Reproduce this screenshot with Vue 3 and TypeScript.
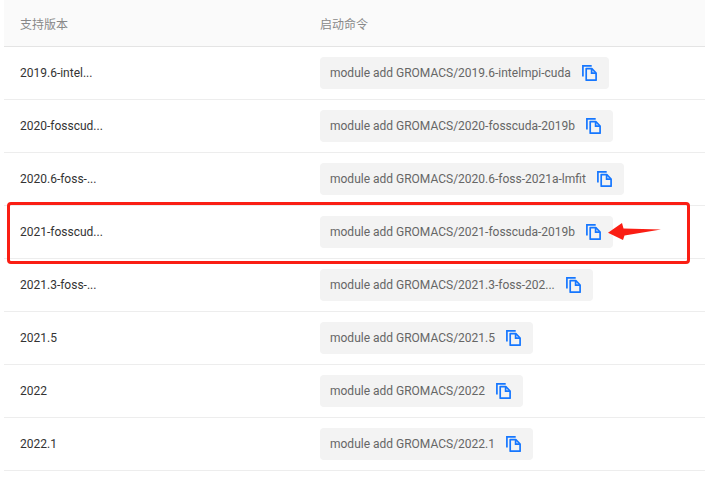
<script setup lang="ts">
interface Row { version: string; command: string }
const rows: Row[] = [
  { version: '2019.6-intel...', command: 'module add GROMACS/2019.6-intelmpi-cuda' },
  { version: '2020-fosscud...', command: 'module add GROMACS/2020-fosscuda-2019b' },
  { version: '2020.6-foss-...', command: 'module add GROMACS/2020.6-foss-2021a-lmfit' },
  { version: '2021-fosscud...', command: 'module add GROMACS/2021-fosscuda-2019b' },
  { version: '2021.3-foss-...', command: 'module add GROMACS/2021.3-foss-202...' },
  { version: '2021.5', command: 'module add GROMACS/2021.5' },
  { version: '2022', command: 'module add GROMACS/2022' },
  { version: '2022.1', command: 'module add GROMACS/2022.1' },
]
</script>

<template>
  <div class="page">
    <div class="table">
      <div class="row head">
        <div class="col-a">支持版本</div>
        <div class="col-b">启动命令</div>
      </div>
      <div v-for="r in rows" :key="r.version" class="row">
        <div class="col-a version">{{ r.version }}</div>
        <div class="col-b">
          <div class="chip">
            <span class="cmd">{{ r.command }}</span>
            <svg class="copy" width="15" height="16" viewBox="0 0 15 16" fill="none" stroke="#1677ff" stroke-width="1.7">
              <path d="M.9 11.5V.9h8.8" />
              <path d="M4.2 3.6h5.6l4.3 4.4v7.2H4.2z" stroke-linejoin="round" />
              <path d="M9.6 3.8v4.4h4.4" />
            </svg>
          </div>
        </div>
      </div>
    </div>
    <div class="mark"></div>
    <svg class="arrow" width="56" height="20" viewBox="0 0 56 20">
      <path d="M0 10.7 14 1l1.5 5.5L53 7.5 16.5 13.5 15 18z" fill="#fa1e14" />
    </svg>
  </div>
</template>

<style>
html, body { margin: 0; background: #fff; }
</style>

<style scoped>
.page {
  position: relative;
  width: 705px;
  height: 485px;
  overflow: hidden;
  font-family: Roboto, "Noto Sans CJK SC", sans-serif;
  font-size: 12px;
}
.table { margin-left: 4px; }
.row {
  display: flex;
  align-items: center;
  height: 52px;
  border-bottom: 1px solid #ededed;
  color: #333;
}
.head {
  height: 46px;
  background: #fafafa;
  border-bottom-color: #e4e4e4;
  color: #888;
}
.col-a { width: 316px; padding-left: 16px; box-sizing: border-box; }
.col-b { flex: 1; }
.chip {
  display: inline-flex;
  align-items: center;
  height: 32px;
  padding: 0 12px 0 10px;
  background: #f3f3f3;
  border-radius: 4px;
  color: #666;
}
.cmd { white-space: nowrap; }
.copy { margin-left: 11px; flex: none; }
.mark {
  position: absolute;
  left: 7px;
  top: 202px;
  width: 683px;
  height: 62px;
  box-sizing: border-box;
  border: 3px solid #fa1e14;
  border-radius: 4px;
}
.arrow { position: absolute; left: 608px; top: 222px; }
</style>
